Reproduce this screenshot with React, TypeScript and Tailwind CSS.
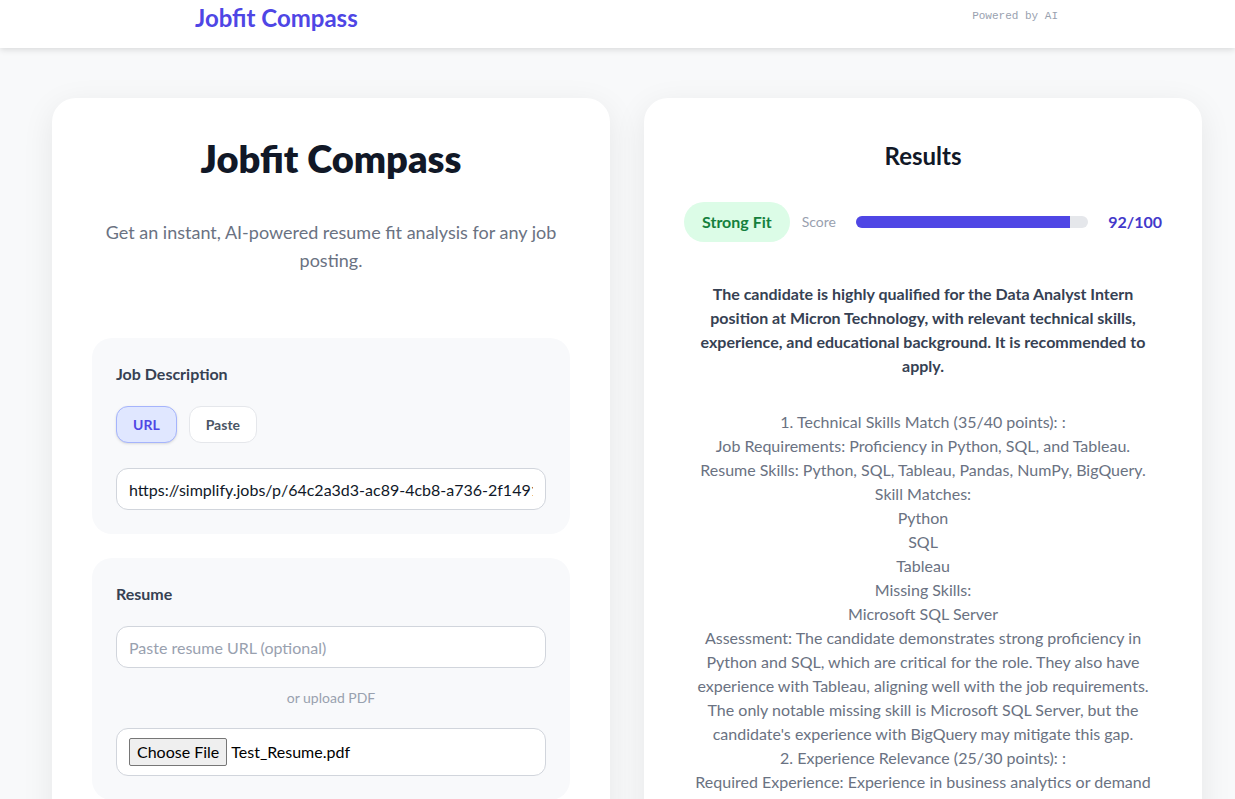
import React from "react";

const font = { fontFamily: "Lato, 'Noto Sans', sans-serif" };

export default function App() {
  return (
    <div className="min-h-screen bg-[#f8f9fa] text-gray-900" style={font}>
      <header className="h-12 bg-white shadow-[0_2px_6px_rgba(0,0,0,0.12)] flex items-start justify-between pl-[195px] pr-[177px]">
        <div className="pt-[2px] text-2xl leading-8 font-bold text-[#4f46e5]">Jobfit Compass</div>
        <div className="pt-[8px] text-[11px] leading-4 text-gray-400" style={{ fontFamily: "'Liberation Mono', monospace" }}>
          Powered by AI
        </div>
      </header>

      <main className="flex items-start gap-[34px] pl-[52px] pr-[33px] pt-[50px] pb-10">
        {/* Left card */}
        <section className="w-[558px] bg-white rounded-3xl shadow-[0_8px_32px_rgba(0,0,0,0.08)] px-10 pt-10 pb-10">
          <h1 className="text-center text-[38px] leading-10 font-extrabold text-[#111827]">Jobfit Compass</h1>
          <p className="mt-10 text-center text-lg leading-7 text-gray-500">
            Get an instant, AI-powered resume fit analysis for any job posting.
          </p>

          <div className="mt-16 rounded-[20px] bg-[#f8f9fb] p-6">
            <div className="text-base leading-6 font-bold text-gray-700">Job Description</div>
            <div className="mt-5 flex gap-3">
              <button className="h-[37px] px-4 rounded-xl border border-[#a5b4fc] bg-[#e0e7ff] text-sm font-bold text-[#4f46e5] shadow-sm">
                URL
              </button>
              <button className="h-[37px] px-4 rounded-xl border border-gray-200 bg-white text-sm font-bold text-gray-600">
                Paste
              </button>
            </div>
            <input
              readOnly
              value="https://simplify.jobs/p/64c2a3d3-ac89-4cb8-a736-2f1491c8e7a2/Data-Analyst-Intern"
              className="mt-[25px] block w-full h-[42px] px-3 rounded-xl border border-gray-300 bg-white text-base text-gray-900 outline-none"
            />
          </div>

          <div className="mt-6 rounded-[20px] bg-[#f8f9fb] p-6">
            <div className="text-base leading-6 font-bold text-gray-700">Resume</div>
            <input
              readOnly
              placeholder="Paste resume URL (optional)"
              className="mt-5 block w-full h-[42px] px-3 rounded-xl border border-gray-300 bg-white text-base text-gray-900 placeholder:text-gray-400 outline-none"
            />
            <div className="mt-5 text-center text-sm leading-5 text-gray-400">or upload PDF</div>
            <div className="mt-5 h-12 flex items-center px-3 rounded-xl border border-gray-300 bg-white">
              <span className="h-[28px] px-[7px] flex items-center border border-[#767676] rounded-[2px] bg-[#efefef] text-base text-black">
                Choose File
              </span>
              <span className="ml-1 text-base text-black">Test_Resume.pdf</span>
            </div>
          </div>
        </section>

        {/* Right card */}
        <section className="w-[558px] bg-white rounded-3xl shadow-[0_8px_32px_rgba(0,0,0,0.08)] px-10 pt-[42px] pb-10">
          <h2 className="text-center text-2xl leading-8 font-bold text-[#111827]">Results</h2>
          <div className="mt-[30px] flex items-center">
            <span className="h-10 px-[18px] flex items-center rounded-full bg-[#dcfce7] text-base font-bold text-[#15803d]">
              Strong Fit
            </span>
            <span className="ml-3 text-sm text-gray-400">Score</span>
            <div className="flex-1 mx-5 h-3 rounded-full bg-gray-200 overflow-hidden">
              <div className="h-full bg-[#4f46e5]" style={{ width: "92%" }} />
            </div>
            <span className="text-base font-bold text-[#4338ca]">92/100</span>
          </div>

          <p className="mt-10 text-center text-base leading-6 font-bold text-gray-700">
            The candidate is highly qualified for the Data Analyst Intern position at Micron Technology, with relevant
            technical skills, experience, and educational background. It is recommended to apply.
          </p>

          <div className="mt-8 text-center text-base leading-6 text-gray-500">
            <div>1. Technical Skills Match (35/40 points): :</div>
            <div>Job Requirements: Proficiency in Python, SQL, and Tableau.</div>
            <div>Resume Skills: Python, SQL, Tableau, Pandas, NumPy, BigQuery.</div>
            <div>Skill Matches:</div>
            <div>Python</div>
            <div>SQL</div>
            <div>Tableau</div>
            <div>Missing Skills:</div>
            <div>Microsoft SQL Server</div>
            <div>
              Assessment: The candidate demonstrates strong proficiency in Python and SQL, which are critical for the
              role. They also have experience with Tableau, aligning well with the job requirements. The only notable
              missing skill is Microsoft SQL Server, but the candidate's experience with BigQuery may mitigate this gap.
            </div>
            <div>2. Experience Relevance (25/30 points): :</div>
            <div>
              Required Experience: Experience in business analytics or demand planning, with strong communication and
              problem-solving skills.
            </div>
            <div>Resume Experience: Data analytics internships and academic projects.</div>
          </div>
        </section>
      </main>
    </div>
  );
}
